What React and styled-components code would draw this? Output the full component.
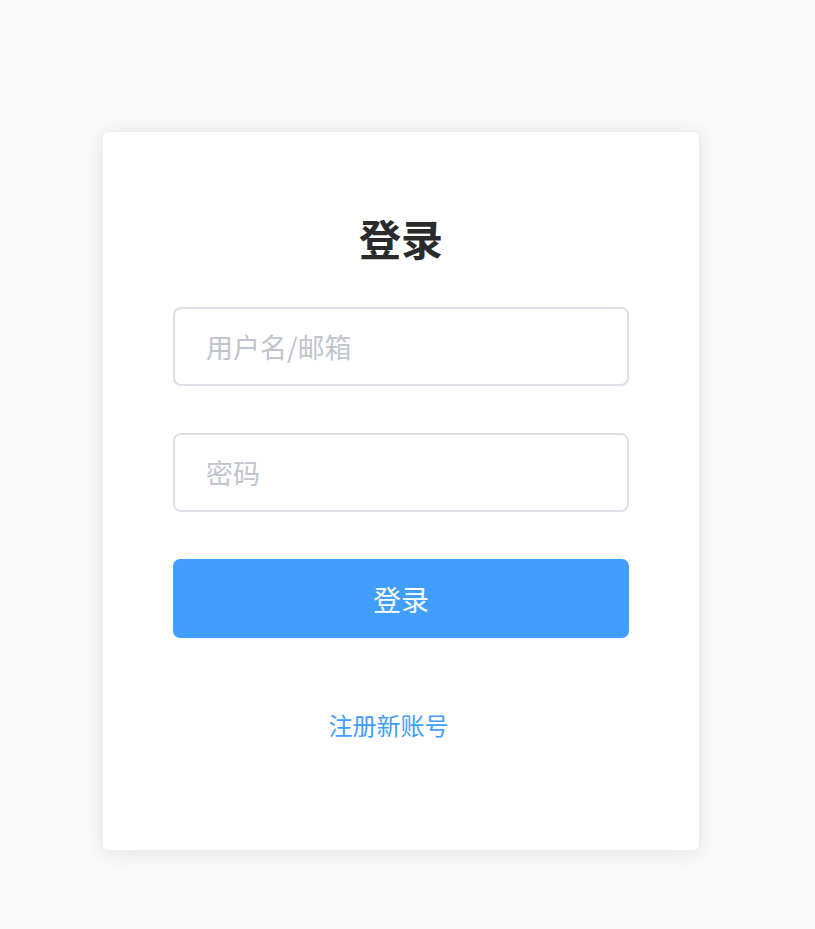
import React from 'react'
import styled, { createGlobalStyle } from 'styled-components'

const GlobalStyle = createGlobalStyle`
  html, body {
    margin: 0;
    padding: 0;
    background: #f9f9f9;
    font-family: "Noto Sans CJK SC", "Noto Sans", sans-serif;
  }
`

const Page = styled.div`
  min-height: 929px;
  display: flex;
  justify-content: center;
  align-items: flex-start;
  padding: 131px 13px 0 0;
  box-sizing: border-box;
`

const Card = styled.div`
  width: 598px;
  height: 720px;
  box-sizing: border-box;
  padding: 76px 70px 0 70px;
  background: #fff;
  border: 1px solid #ebeef5;
  border-radius: 6px;
  box-shadow: 0 2px 20px rgba(0, 0, 0, 0.09);
  display: flex;
  flex-direction: column;
`

const Title = styled.h2`
  margin: 0 0 39px;
  text-align: center;
  font-size: 42px;
  line-height: 60px;
  font-weight: 700;
  color: #2b2b2b;
`

const Input = styled.input`
  height: 79px;
  width: 100%;
  box-sizing: border-box;
  margin-bottom: 47px;
  padding: 0 31px;
  border: 2px solid #dcdfe6;
  border-radius: 8px;
  font-family: inherit;
  font-size: 27px;
  color: #606266;
  outline: none;

  &::placeholder {
    color: #c0c4cc;
  }
`

const Button = styled.button`
  height: 79px;
  width: 100%;
  border: none;
  border-radius: 7px;
  background: #409eff;
  color: #fff;
  font-family: inherit;
  font-size: 28px;
  cursor: pointer;
`

const Footer = styled.div`
  margin-top: 69px;
  text-align: center;
  padding-right: 25px;
`

const Link = styled.a`
  font-size: 24px;
  line-height: 36px;
  color: #409eff;
  text-decoration: none;
  cursor: pointer;
`

export default function App() {
  return (
    <>
      <GlobalStyle />
      <Page>
        <Card>
          <Title>登录</Title>
          <Input placeholder="用户名/邮箱" />
          <Input type="password" placeholder="密码" />
          <Button>登录</Button>
          <Footer>
            <Link>注册新账号</Link>
          </Footer>
        </Card>
      </Page>
    </>
  )
}
